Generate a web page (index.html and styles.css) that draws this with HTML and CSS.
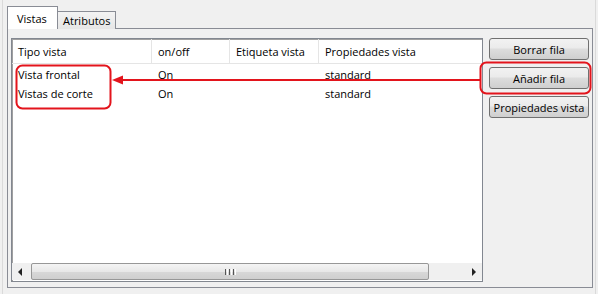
FILE: index.html
```html
<html>
<head>
<link rel="stylesheet" href="styles.css">
</head>
<body>
<div id="ventana">
    <div class="pestanas">
        <div class="pestana activa">Vistas</div>
        <div class="pestana">Atributos</div>
    </div>
    <div class="panel">
        <div class="lista">
            <div class="cabecera">
                <div class="col c1">Tipo vista</div>
                <div class="col c2">on/off</div>
                <div class="col c3">Etiqueta vista</div>
                <div class="col c4">Propiedades vista</div>
            </div>
            <div class="fila">
                <div class="col c1">Vista frontal</div>
                <div class="col c2">On</div>
                <div class="col c3"></div>
                <div class="col c4">standard</div>
            </div>
            <div class="fila">
                <div class="col c1">Vistas de corte</div>
                <div class="col c2">On</div>
                <div class="col c3"></div>
                <div class="col c4">standard</div>
            </div>
            <div class="vacio"></div>
            <div class="scroll">
                <div class="flecha">
                    <svg width="5" height="8" viewBox="0 0 5 8"><path d="M4 0 L0 4 L4 8 Z" fill="#222"/></svg>
                </div>
                <div class="pulgar">
                    <div class="agarre"><i></i><i></i><i></i></div>
                </div>
                <div class="pista"></div>
                <div class="flecha">
                    <svg width="5" height="8" viewBox="0 0 5 8"><path d="M1 0 L5 4 L1 8 Z" fill="#222"/></svg>
                </div>
            </div>
        </div>
        <div class="botones">
            <button type="button">Borrar fila</button>
            <button type="button">Añadir fila</button>
            <button type="button">Propiedades vista</button>
        </div>
    </div>
</div>

<svg class="notas" width="598" height="294" viewBox="0 0 598 294">
    <rect x="16.5" y="65.5" width="94" height="43" rx="6" fill="none" stroke="#e3141c" stroke-width="2"/>
    <rect x="480.5" y="62.5" width="110" height="31" rx="6" fill="none" stroke="#e3141c" stroke-width="2"/>
    <line x1="120" y1="80" x2="481" y2="80" stroke="#e3141c" stroke-width="2"/>
    <path d="M112 80 L123 75.5 L123 84.5 Z" fill="#e3141c"/>
</svg>
</body>
</html>
```

FILE: styles.css
```css
body {
    margin: 0;
    width: 598px;
    height: 294px;
    background-color: #f0f0f0;
    font-family: "Segoe UI", "Open Sans", sans-serif;
    font-size: 11px;
    color: #000;
    position: relative;
    overflow: hidden;
}

#ventana {
    margin-left: 2px;
    width: 594px;
    height: 294px;
    border-left: 1px solid #dadada;
    border-right: 1px solid #dadada;
    box-sizing: border-box;
    padding: 6px 2px 0 4px;
}

.pestanas {
    display: flex;
    align-items: flex-end;
    height: 23px;
    margin-bottom: -1px;
    position: relative;
    z-index: 1;
}

.pestana {
    height: 18px;
    line-height: 17px;
    padding: 0 5px 0 5px;
    border: 1px solid #898c95;
    border-bottom: none;
    border-left: none;
    background: linear-gradient(#f3f3f3, #e6e6e6);
    box-sizing: border-box;
}

.pestana.activa {
    height: 23px;
    line-height: 23px;
    width: 51px;
    padding-left: 9px;
    border-left: 1px solid #898c95;
    background: #fff;
}

.panel {
    display: flex;
    gap: 6px;
    height: 260px;
    border: 1px solid #898c95;
    box-sizing: border-box;
    padding: 9px 3px 5px 3px;
}

.lista {
    width: 472px;
    display: flex;
    flex-direction: column;
    background: #fff;
    border: 1px solid #828790;
    box-shadow: inset 1px 1px 0 #a0a0a0;
}

.cabecera {
    display: flex;
    height: 24px;
    border-bottom: 1px solid #e5e5e5;
    margin-bottom: 1px;
}

.cabecera .col {
    padding-top: 2px;
    line-height: 22px;
    border-right: 1px solid #e5e5e5;
}

.fila {
    display: flex;
    height: 19px;
}

.fila .col {
    line-height: 19px;
}

.col {
    padding-left: 6px;
    box-sizing: border-box;
    white-space: nowrap;
}

.c1 { width: 140px; }
.c2 { width: 78px; }
.c3 { width: 89px; }
.c4 { flex: 1; border-right: none !important; }

.vacio {
    flex: 1;
}

.scroll {
    display: flex;
    height: 17px;
    background: #f0f0f0;
    margin-bottom: 1px;
}

.flecha {
    width: 17px;
    display: flex;
    align-items: center;
    justify-content: center;
}

.pulgar {
    width: 398px;
    margin: 0 2px 0 2px;
    border: 1px solid #979797;
    border-radius: 2px;
    box-sizing: border-box;
    background: linear-gradient(#f4f4f4, #e8e8e8 50%, #d8d8d8 51%, #cfcfcf);
    display: flex;
    justify-content: center;
    align-items: center;
}

.agarre {
    display: flex;
    gap: 1px;
}

.agarre i {
    width: 1px;
    height: 6px;
    border-left: 1px solid #555;
    border-right: 1px solid #fff;
}

.pista {
    flex: 1;
}

.botones {
    display: flex;
    flex-direction: column;
    gap: 7px;
}

button {
    width: 100px;
    height: 22px;
    padding: 0;
    font-family: inherit;
    font-size: 11px;
    color: #000;
    border: 1px solid #707070;
    border-radius: 3px;
    background: linear-gradient(#f2f2f2, #ebebeb 45%, #dddddd 50%, #cfcfcf);
}

.notas {
    position: absolute;
    left: 0;
    top: 0;
}
```
